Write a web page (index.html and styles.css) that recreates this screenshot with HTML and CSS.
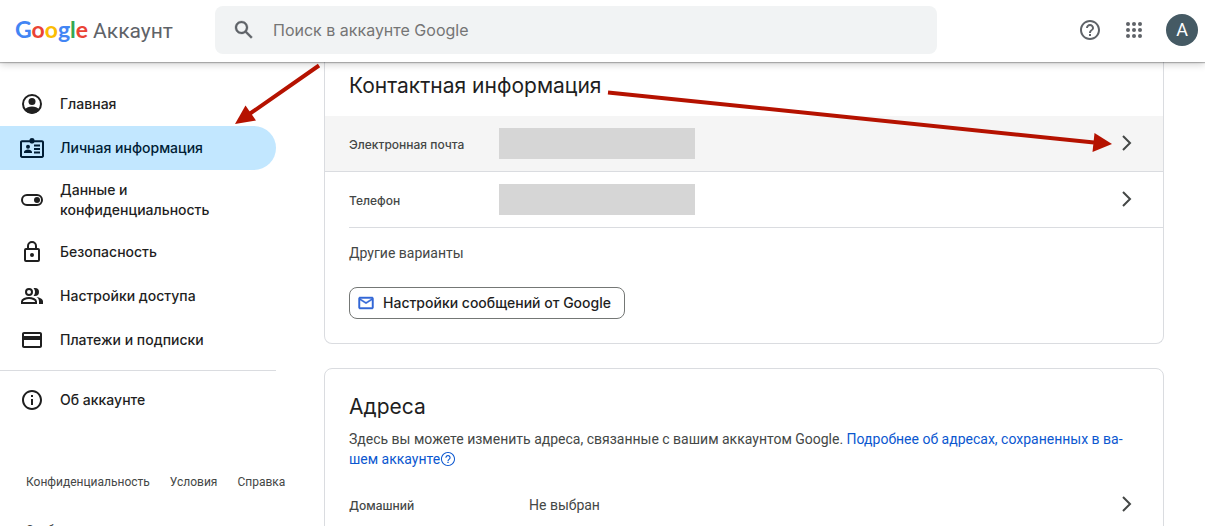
FILE: index.html
```html
<!DOCTYPE html>
<html lang="ru">
<head>
<meta charset="utf-8">
<meta name="viewport" content="width=device-width, initial-scale=1">
<title>Google Аккаунт</title>
<link rel="stylesheet" href="styles.css">
</head>
<body>
<header class="topbar">
  <a class="brand" href="#"><span class="logo"><span class="blue">G</span><span class="red">o</span><span class="yellow">o</span><span class="blue">g</span><span class="green">l</span><span class="red">e</span></span><span class="product">Аккаунт</span></a>
  <form class="search" role="search">
    <button class="icon-button" type="submit" aria-label="Поиск"><svg width="24" height="24" viewBox="0 0 24 24" fill="currentColor"><path d="M20.49 19l-5.73-5.73C15.53 12.2 16 10.91 16 9.5 16 5.91 13.09 3 9.5 3S3 5.91 3 9.5 5.91 16 9.5 16c1.41 0 2.7-.47 3.77-1.24L19 20.49 20.49 19zM5 9.5C5 7.01 7.01 5 9.5 5S14 7.01 14 9.5 11.99 14 9.5 14 5 11.99 5 9.5z" stroke="currentColor" stroke-width=".3"/></svg></button>
    <input class="search-input" type="search" aria-label="Поиск в аккаунте Google" placeholder="Поиск в аккаунте Google">
  </form>
  <div class="actions">
    <button class="icon-button" type="button" aria-label="Справка"><svg width="24" height="24" viewBox="0 0 24 24" fill="currentColor"><path d="M11 18h2v-2h-2v2zm1-16C6.48 2 2 6.48 2 12s4.480 10 10 10 10-4.480 10-10S17.520 2 12 2zm0 18c-4.410 0-8-3.590-8-8s3.590-8 8-8 8 3.590 8 8-3.590 8-8 8zm0-14c-2.210 0-4 1.790-4 4h2c0-1.100.9-2 2-2s2 .9 2 2c0 2-3 1.750-3 5h2c0-2.250 3-2.500 3-5 0-2.210-1.790-4-4-4z"/></svg></button>
    <button class="icon-button" type="button" aria-label="Приложения Google"><svg width="24" height="24" viewBox="0 0 24 24" fill="currentColor"><circle cx="6" cy="6" r="2"/><circle cx="12" cy="6" r="2"/><circle cx="18" cy="6" r="2"/><circle cx="6" cy="12" r="2"/><circle cx="12" cy="12" r="2"/><circle cx="18" cy="12" r="2"/><circle cx="6" cy="18" r="2"/><circle cx="12" cy="18" r="2"/><circle cx="18" cy="18" r="2"/></svg></button>
    <button class="avatar" type="button">A</button>
  </div>
</header>
<div class="page">
  <aside class="sidebar">
    <nav class="nav">
      <a class="nav-item" href="#"><svg width="24" height="24" viewBox="0 0 24 24"><circle cx="12" cy="12" r="9" fill="none" stroke="currentColor" stroke-width="2"/><circle cx="12" cy="9.500" r="3.500" fill="currentColor"/><path fill="currentColor" d="M4.500 17.500C6.500 15.500 9 14.500 12 14.500s5.500 1 7.500 3C18 20 15 21.500 12 21.500S6 20 4.500 17.500z"/></svg>Главная</a>
      <a class="nav-item nav-item-active" href="#"><svg width="24" height="24" viewBox="0 0 24 24" fill="currentColor"><path fill-rule="evenodd" d="M9.500 4.200C9.500 2.900 10.600 2 12 2s2.500.9 2.500 2.200H22c1.100 0 2 .8 2 1.900v14c0 1.100-.9 1.900-2 1.900H2c-1.100 0-2-.8-2-1.900v-14c0-1.100.9-1.900 2-1.900h7.500zM2 6.200V20h20V6.200h-7.600C14 7.100 13.100 7.600 12 7.600S10 7.100 9.600 6.200H2z"/><circle cx="8" cy="10.700" r="2"/><path d="M4 17v-.9c0-1.600 2.300-2.500 4-2.500s4 .9 4 2.500v.9zM14 8.500h6v2h-6zM14 12h6v2h-6zM14 15.500h6v2h-6z"/></svg>Личная информация</a>
      <a class="nav-item nav-item-tall" href="#"><svg width="24" height="24" viewBox="0 0 24 24"><rect x="2" y="7" width="20" height="10" rx="5" fill="none" stroke="currentColor" stroke-width="2"/><circle cx="17" cy="12" r="3" fill="currentColor"/></svg><span>Данные и конфиденциальность</span></a>
      <a class="nav-item" href="#"><svg width="24" height="24" viewBox="0 0 24 24" fill="none" stroke="currentColor" stroke-width="2"><rect x="5" y="9" width="14" height="12" rx="1"/><path d="M8 9V6a4 4 0 0 1 8 0v3"/><circle cx="12" cy="15" r="2" fill="currentColor" stroke="none"/></svg>Безопасность</a>
      <a class="nav-item" href="#"><svg width="24" height="24" viewBox="0 0 24 24"><g fill="none" stroke="currentColor" stroke-width="2"><circle cx="9" cy="8" r="3"/><path d="M2 19v-1.500C2 15.500 6 14 9 14s7 1.500 7 3.500V19z"/></g><path fill="currentColor" d="M13.500 4.300c1 1 1.500 2.300 1.500 3.700s-.5 2.700-1.500 3.700c.5.200 1 .3 1.500.3a4 4 0 0 0 0-8c-.5 0-1 .1-1.500.3zM16.500 13.100c1.500 1 2.500 2.400 2.500 4.300V20h4v-2.500c0-2.400-3.200-3.900-6.500-4.400z"/></svg>Настройки доступа</a>
      <a class="nav-item" href="#"><svg width="24" height="24" viewBox="0 0 24 24" fill="currentColor"><path d="M20 4H4c-1.110 0-2 .89-2 2v12c0 1.110.89 2 2 2h16c1.110 0 2-.89 2-2V6c0-1.110-.89-2-2-2zm0 14H4v-6h16v6zm0-10H4V6h16v2z"/></svg>Платежи и подписки</a>
      <hr class="nav-rule">
      <a class="nav-item" href="#"><svg width="24" height="24" viewBox="0 0 24 24" fill="currentColor"><path d="M11 7h2v2h-2zm0 4h2v6h-2zm1-9C6.480 2 2 6.480 2 12s4.480 10 10 10 10-4.480 10-10S17.520 2 12 2zm0 18c-4.410 0-8-3.590-8-8s3.590-8 8-8 8 3.590 8 8-3.590 8-8 8z"/></svg>Об аккаунте</a>
    </nav>
    <footer class="footer">
      <a href="#">Конфиденциальность</a><a href="#">Условия</a><a href="#">Справка</a><a href="#">Сообщество</a>
    </footer>
  </aside>
  <main class="content">
    <section class="card card-contact">
      <h2>Контактная информация</h2>
      <a class="row row-hover" href="#"><span class="label">Электронная почта</span><span class="redacted"></span><svg class="chevron" width="24" height="24" viewBox="0 0 24 24"><path d="M8 4l7 7-7 7"/></svg></a>
      <a class="row row-inset" href="#"><span class="label">Телефон</span><span class="redacted"></span><svg class="chevron" width="24" height="24" viewBox="0 0 24 24"><path d="M8 4l7 7-7 7"/></svg></a>
      <p class="more">Другие варианты</p>
      <button class="chip" type="button"><svg width="18" height="18" viewBox="0 0 24 24" fill="currentColor"><path d="M22 6c0-1.100-.9-2-2-2H4c-1.100 0-2 .9-2 2v12c0 1.100.9 2 2 2h16c1.100 0 2-.9 2-2V6zm-2 0l-8 5-8-5h16zm0 12H4V8l8 5 8-5v10z" stroke="currentColor" stroke-width=".6"/></svg>Настройки сообщений от Google</button>
    </section>
    <section class="card card-address">
      <h2>Адреса</h2>
      <p class="text">Здесь вы можете изменить адреса, связанные с вашим аккаунтом Google. <a href="#">Подробнее об адресах, сохраненных в ва&shy;шем аккаунте<svg class="help" width="16" height="16" viewBox="0 0 24 24" fill="currentColor"><path d="M11 18h2v-2h-2v2zm1-15C7 3 3 7 3 12s4 9 9 9 9-4 9-9-4-9-9-9zm0 19.500C6.200 22.500 1.500 17.800 1.500 12S6.200 1.500 12 1.500 22.500 6.200 22.500 12 17.800 22.500 12 22.500zM12 6c-2.210 0-4 1.790-4 4h1.700c0-1.300 1-2.300 2.300-2.300s2.300 1 2.300 2.300c0 2-3.100 1.900-3.100 5h1.700c0-2.200 3.100-2.400 3.100-5 0-2.210-1.790-4-4-4z"/></svg></a></p>
      <a class="row row-home" href="#"><span class="label">Домашний</span><span class="value">Не выбран</span><svg class="chevron" width="24" height="24" viewBox="0 0 24 24"><path d="M8 4l7 7-7 7"/></svg></a>
    </section>
  </main>
</div>
<svg class="arrows" width="1205" height="526" viewBox="0 0 1205 526" aria-hidden="true">
  <path d="M319 65.500L248 115M608 92.500L1094 142.500"/>
  <polygon points="235,124 245.500,105.500 256,120.500"/>
  <polygon points="1112,144 1094.500,133 1092.500,152"/>
</svg>
</body>
</html>
```
FILE: styles.css
```css
* { box-sizing: border-box; }

body {
  margin: 0;
  height: 100vh;
  display: flex;
  flex-direction: column;
  overflow: hidden;
  position: relative;
  background: #fff;
  color: #1f1f1f;
  font: 14px/20px Roboto, sans-serif;
}

a { color: inherit; text-decoration: none; }
svg { flex: none; }
h2, p { margin: 0; }

button {
  font: inherit;
  color: inherit;
  border: 0;
  padding: 0;
  background: none;
  cursor: pointer;
}

.topbar {
  flex: none;
  display: flex;
  align-items: center;
  height: 62px;
  padding: 0 7px 2px 15px;
  color: #5f6368;
  box-shadow: 0 1px 1px rgba(0, 0, 0, .25), 0 2px 8px rgba(0, 0, 0, .2);
  z-index: 1;
}

.brand { display: flex; align-items: baseline; gap: 5px; width: 200px; font-size: 21px; line-height: 28px; }
.logo { font-family: Lato, sans-serif; font-size: 23px; font-weight: 700; }
.blue { color: #4285f4; }
.red { color: #ea4335; }
.yellow { color: #fbbc04; }
.green { color: #34a853; }

.search {
  flex: 1;
  max-width: 722px;
  height: 48px;
  display: flex;
  align-items: center;
  gap: 17px;
  padding: 0 17px;
  border-radius: 8px;
  background: #f1f3f4;
}

.icon-button { display: flex; }

.search-input {
  flex: 1;
  min-width: 0;
  padding: 0;
  border: 0;
  outline: 0;
  background: none;
  font: 16px/24px Inter, Roboto, sans-serif;
  color: #202124;
}
.search-input::placeholder { color: #757575; opacity: 1; }

.actions { display: flex; align-items: center; gap: 20px; margin-left: auto; }

.avatar {
  width: 32px;
  height: 32px;
  border-radius: 50%;
  background: #455a64;
  color: #fff;
  font-size: 18px;
  line-height: 32px;
}

.page { flex: 1; min-height: 0; display: flex; gap: 48px; }
.sidebar { flex: none; width: 276px; padding-top: 20px; }

.nav-item {
  display: flex;
  align-items: center;
  gap: 16px;
  height: 44px;
  padding: 0 40px 0 20px;
  font-family: Inter, Roboto, sans-serif;
  font-weight: 500;
}
.nav-item-active { background: #c2e7ff; color: #001d35; border-radius: 0 22px 22px 0; }
.nav-item-tall { height: 60px; }
.nav-rule { margin: 8px 0 7px; border: 0; border-top: 1px solid #dadce0; }

.footer {
  display: flex;
  flex-wrap: wrap;
  gap: 32px 20px;
  width: 300px;
  margin-top: 52px;
  padding-left: 26px;
  font-size: 12px;
  line-height: 16px;
  color: #444746;
}

.content { flex: 1; min-width: 0; max-width: 881px; padding-right: 41px; }
.card { border: 1px solid #dadce0; border-radius: 8px; }
.card h2 { padding: 0 24px; font: 400 21px/28px Inter, Roboto, sans-serif; }
.card-contact { border-top: 0; border-radius: 0 0 8px 8px; padding: 10px 0 24px; }
.card-contact h2 { margin-bottom: 16px; }
.card-address { margin-top: 24px; padding-top: 24px; }

.row {
  display: flex;
  align-items: center;
  height: 56px;
  padding: 0 24px;
  border-bottom: 1px solid #dadce0;
}
.row-hover { background: #f5f5f5; }
.row-inset { margin-left: 24px; padding-left: 0; }
.label {
  width: 150px;
  padding-top: 2px;
  font: 500 12px/16px Inter, Roboto, sans-serif;
  color: #444746;
}
.redacted { width: 196px; height: 31px; background: #d6d6d6; }
.chevron { margin-left: auto; fill: none; stroke: #444746; stroke-width: 2; }

.more { padding: 15px 24px 24px; color: #444746; }

.chip {
  display: flex;
  align-items: center;
  gap: 8px;
  height: 32px;
  margin-left: 24px;
  padding: 0 13px 0 7px;
  border: 1px solid #747775;
  border-radius: 8px;
  font-family: Inter, Roboto, sans-serif;
  font-weight: 500;
}
.chip svg { color: #3367d6; }

.text { padding: 8px 24px 0; color: #444746; }
.text a { color: #0b57d0; }
.help { vertical-align: -3px; }
.row-home { margin-top: 8px; }
.row-home .label { width: 180px; }
.value { color: #444746; }

.arrows { position: absolute; top: 0; left: 0; z-index: 2; pointer-events: none; }
.arrows path { stroke: #b51200; stroke-width: 4; }
.arrows polygon { fill: #b51200; }
```
